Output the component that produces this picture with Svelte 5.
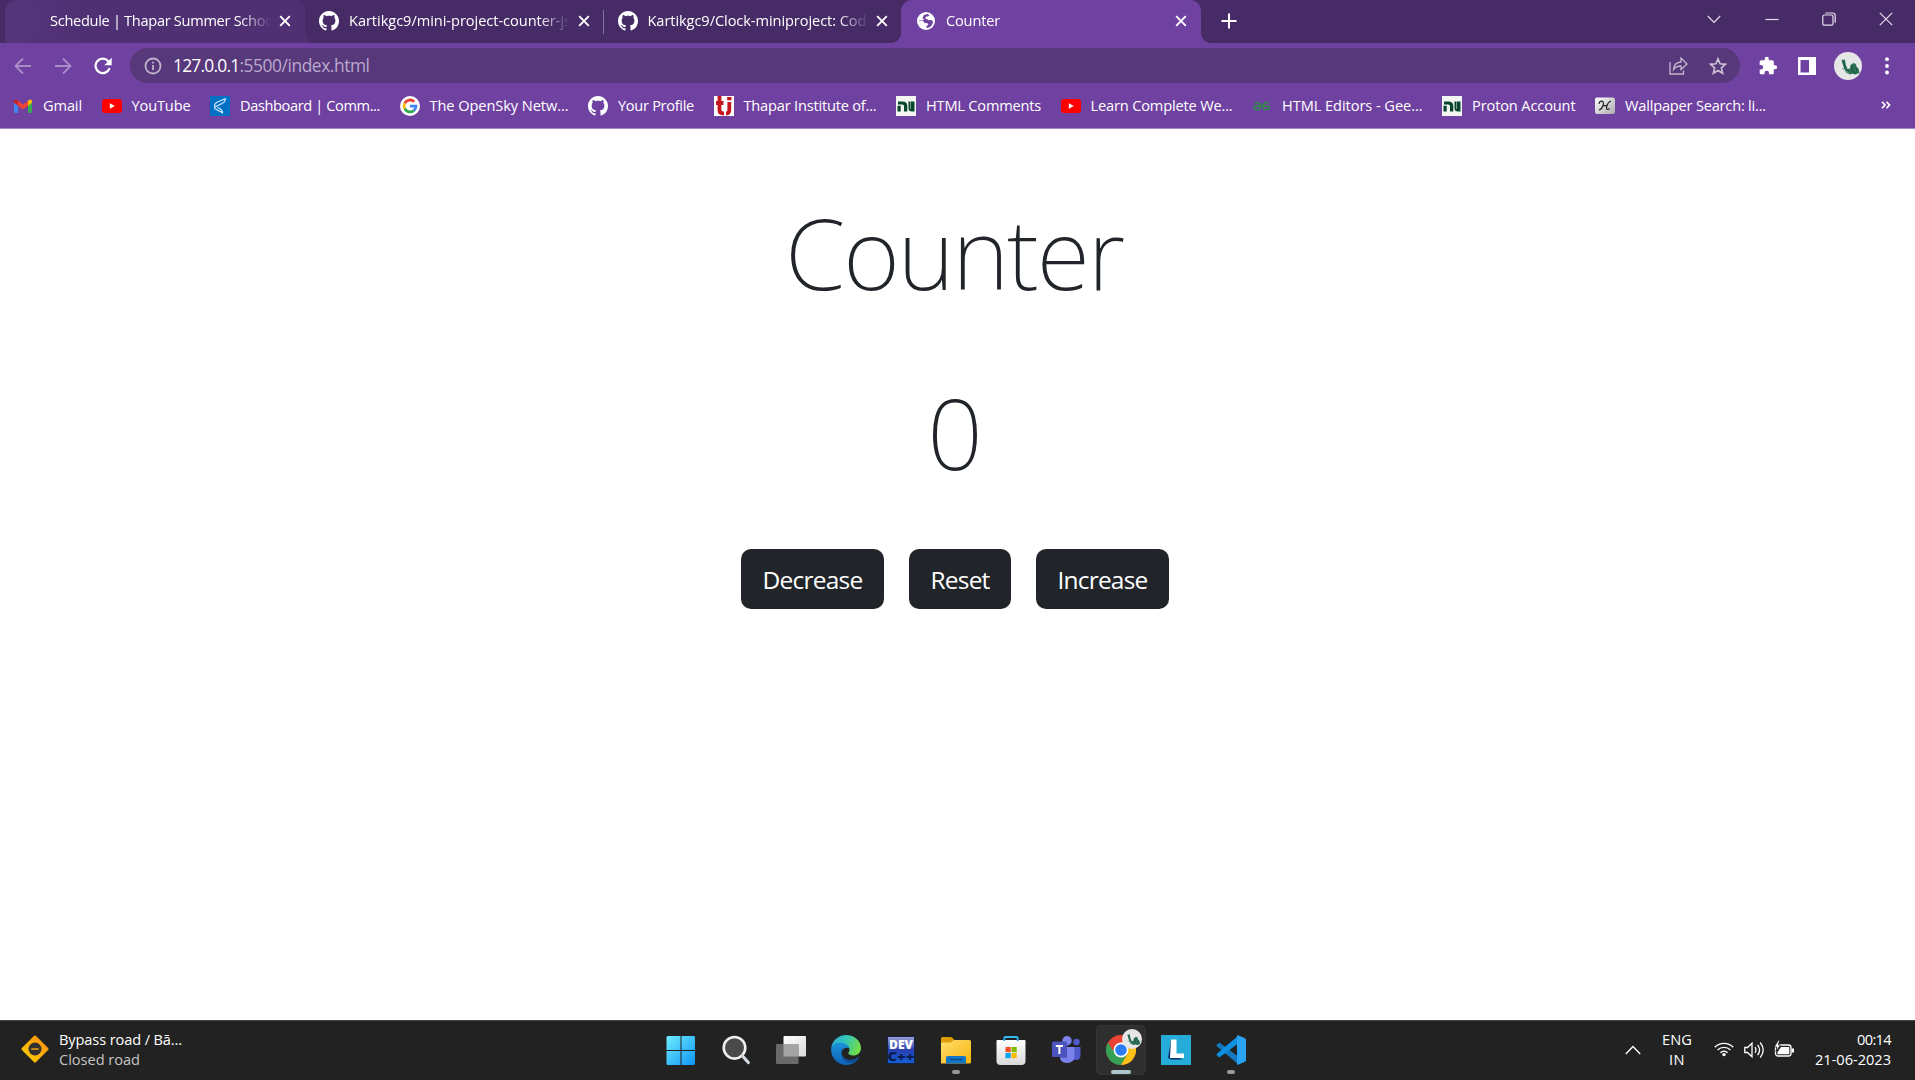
<script>
  let count = $state(0);

  // Spreads letter spacing so a label fills the given width in pixels.
  function fit(node, width) {
    const natural = node.getBoundingClientRect().width;
    node.style.letterSpacing = (width - natural) / node.textContent.length + 'px';
  }

  const tabs = [
    { title: 'Schedule | Thapar Summer School', width: 227, icon: '', kind: 'hover' },
    { title: 'Kartikgc9/mini-project-counter-js', width: 222, icon: 'github', kind: 'divided' },
    { title: 'Kartikgc9/Clock-miniproject: Code', width: 227, icon: 'github', kind: '' },
    { title: 'Counter', width: 54, icon: 'globe', kind: 'active' }
  ];

  const bookmarks = [
    { label: 'Gmail', icon: 'gmail', width: 39 },
    { label: 'YouTube', icon: 'youtube', width: 59 },
    { label: 'Dashboard | Comm...', icon: 'dash', width: 140 },
    { label: 'The OpenSky Netw...', icon: 'google', width: 139 },
    { label: 'Your Profile', icon: 'github', width: 76 },
    { label: 'Thapar Institute of...', icon: 'thapar', width: 133 },
    { label: 'HTML Comments', icon: 'nu', width: 115 },
    { label: 'Learn Complete We...', icon: 'youtube', width: 142 },
    { label: 'HTML Editors - Gee...', icon: 'gfg', width: 140.5 },
    { label: 'Proton Account', icon: 'nu', width: 103.5 },
    { label: 'Wallpaper Search: li...', icon: 'wall', width: 141 }
  ];

  const apps = ['start', 'search', 'views', 'edge', 'dev', 'files', 'store', 'teams', 'chrome', 'lens', 'code'];
</script>

{#snippet favicon(name)}
  {#if name === 'github'}
    <svg class="fav" viewBox="0 0 16 16"><path fill="#fff" d="M8 0C3.58 0 0 3.58 0 8c0 3.54 2.29 6.53 5.47 7.59.4.07.55-.17.55-.38 0-.19-.01-.82-.01-1.49-2.01.37-2.53-.49-2.69-.94-.09-.23-.48-.94-.82-1.13-.28-.15-.68-.52-.01-.53.63-.01 1.08.58 1.23.82.72 1.21 1.87.87 2.33.66.07-.52.28-.87.51-1.07-1.78-.2-3.64-.89-3.64-3.95 0-.87.31-1.59.82-2.15-.08-.2-.36-1.02.08-2.12 0 0 .67-.21 2.2.82.64-.18 1.32-.27 2-.27s1.36.09 2 .27c1.53-1.04 2.2-.82 2.2-.82.44 1.1.16 1.92.08 2.12.51.56.82 1.27.82 2.15 0 3.07-1.87 3.75-3.65 3.95.29.25.54.73.54 1.48 0 1.07-.01 1.93-.01 2.2 0 .21.15.46.55.38A8.01 8.01 0 0 0 16 8c0-4.42-3.58-8-8-8z" /></svg>
  {:else if name === 'globe'}
    <svg class="fav" viewBox="0 0 20 20"><circle cx="10" cy="10" r="9" fill="#fff" /><path fill="#6f42a1" d="M11.500 3 13.500 4 12 5.500H10.200L9 7.500l1.800.5 1.700 1.300 3-.3L17 10.500q-.3 4-4 6l-2.500.5 0-1.700L12.500 13.500 11 12H8.500L7.300 10H3.500L3 11.500V10.500L3 9.500H6.500L8 8.500 6.500 7 8 4z" /><path fill="#fff" d="M3 10.500 7 10.800 8.200 12.600 10 13.200 9.500 15.500 10.500 17.500 6 16.500z" /></svg>
  {:else if name === 'gmail'}
    <svg class="fav" viewBox="0 0 20 20"><path fill="#4285f4" d="M1 6v9.600c0 .8.6 1.400 1.400 1.400H5V9z" /><path fill="#34a853" d="M15 9v8h2.600c.8 0 1.400-.6 1.400-1.400V6z" /><path fill="#ea4335" d="M5 4.700v5L10 13.500l5-3.800v-5L10 8.500z" /><path fill="#c5221f" d="M1 5.300v1.500l4 3v-5L4 3.900C2.800 3 1 3.800 1 5.300z" /><path fill="#fbbc04" d="M15 4.700v5l4-3V5.300c0-1.500-1.800-2.300-3-1.400z" /></svg>
  {:else if name === 'youtube'}
    <svg class="fav" viewBox="0 0 20 20"><rect y="3" width="20" height="14" rx="3" fill="#f00" /><path fill="#fff" d="m7.800 7.200 5 2.800-5 2.800z" /></svg>
  {:else if name === 'dash'}
    <svg class="fav" viewBox="0 0 20 20"><path fill="#0070c4" d="M0 0h20v20H0z" /><path fill="none" stroke="#cfe9ff" stroke-width="1.200" d="M15.500 2.500 6.500 6.500Q4.500 7.800 4.500 10.500M15.500 2.500q0 3.500-4.500 5.500L5 11q-1 1 0 1.800l7.500 4q.3-2.500-3-4.300L7.500 11.500" /></svg>
  {:else if name === 'google'}
    <svg class="fav" viewBox="0 0 20 20"><circle cx="10" cy="10" r="10" fill="#fff" /><g fill="none" stroke-width="2.800"><path stroke="#ea4335" d="M4.700 7.300A6 6 0 0 1 14.200 5.700" /><path stroke="#fbbc05" d="M4.700 12.700a6 6 0 0 1 0-5.400" /><path stroke="#34a853" d="M13.800 14.600a6 6 0 0 1-9.100-1.900" /><path stroke="#4285f4" d="M10 10.200h6a6 6 0 0 1-2.200 4.400" /></g></svg>
  {:else if name === 'thapar'}
    <svg class="fav" viewBox="0 0 20 20"><path fill="#fff" d="M0 0h20v20H0z" /><path fill="none" stroke="#c4161c" stroke-width="3.800" d="M5.500 0v14.500q0 3 4.500 3M2 7h7.500M15.300 6v8q0 3.500-3.300 3.500" /><path fill="#c4161c" d="M13.200 1h4.300v3.300h-4.300z" /></svg>
  {:else if name === 'nu'}
    <svg class="fav" viewBox="0 0 20 20"><path fill="#f3f5f3" d="M0 0h20v20H0z" /><path fill="#07452c" d="M1.500 15.500V9.700h3.200v5.800zM2 5.500h4.500q4.800 0 4.800 4.500v5.500H8V10q0-1.500-1.800-1.500H2zM12.500 5.500h1.800v7q0 .5.500.5V5.500h3.700v10h-2.300q-3.700 0-3.700-3.500z" /></svg>
  {:else if name === 'gfg'}
    <svg class="fav" viewBox="0 0 20 20"><path fill="none" stroke="#2f8d46" stroke-width="1.500" d="M1 10.200h17M3 7.200Q5 6 7 7.300q2.300 1.800 1.300 4.500Q6.500 14.500 3.500 13.500 1.700 12.500 2 10.200M16.500 7.200Q14.500 6 12.500 7.300q-2.300 1.800-1.300 4.500 1.800 2.700 4.800 1.700 1.800-1 1.500-3.300" /></svg>
  {:else if name === 'wall'}
    <svg class="fav" viewBox="0 0 20 20"><defs><linearGradient id="wallbg" x2="1" y2="1"><stop stop-color="#fff" /><stop offset="1" stop-color="#aaa" /></linearGradient></defs><rect y="1.500" width="20" height="16.500" rx="2" fill="url(#wallbg)" /><path fill="none" stroke="#222" stroke-width="1.200" d="M4 7.800Q4.500 5 7 5.200q2.200.5 1 4.300Q6.500 13.500 4 14M16 5Q13 6 11.800 10q-.8 3.500.7 3.500 1.200 0 2-1.200M7.500 9.800l4.500-.5" /></svg>
  {/if}
{/snippet}

{#snippet bird()}
  <svg viewBox="0 0 28 28"><circle cx="14" cy="14" r="14" fill="#e6e6e6" /><path fill="#2b7356" d="m7.500 8 3.500-.5.800 5.500 1.700 4 2.500-.5.500-3.500 3-2 2.500 1 .5 3 2 1.500 1 4.500-4 1.500-3-.8-3 .8-3.500-2-2-4-1.500-5z" /><path fill="none" stroke="#174b39" stroke-width=".9" d="m9 9 1.500 4 2 4 4 4m1.500-8 0 5.500 4 3m0-7 1 5" /><path fill="none" stroke="#7fa495" stroke-width="1" d="m8 16.500 3.500 1.500m0 1 4 2.500" /></svg>
{/snippet}

{#snippet closeMark()}
  <svg class="x" viewBox="0 0 12 12"><path fill="none" stroke="#fff" stroke-width="1.900" d="m1.200 1.200 9.600 9.600m0-9.600-9.600 9.600" /></svg>
{/snippet}

{#snippet app(name)}
  <svg class="app" viewBox="0 0 30 30">
    {#if name === 'start'}
      <defs><linearGradient id="win" x1="0" y1="0" x2="30" y2="30" gradientUnits="userSpaceOnUse"><stop stop-color="#72eeff" /><stop offset="1" stop-color="#0c93f5" /></linearGradient></defs>
      <path fill="url(#win)" d="M1.500 1H14.500v14H.500V2zM15.500 1h12.500l1 1v13H15.500zM.5 16H14.500v14H1.500l-1-1zM15.500 16h13.500v13l-1 1H15.500z" />
    {:else if name === 'search'}
      <circle cx="13.500" cy="12.800" r="10.800" fill="#4a4a4a" stroke="#f0f0f0" stroke-width="2.600" /><path stroke="#d4d8e2" stroke-width="3.200" stroke-linecap="round" d="m21.500 21 5.800 6.500" />
    {:else if name === 'views'}
      <defs><linearGradient id="vw" x2="1" y2="1"><stop stop-color="#fff" /><stop offset="1" stop-color="#d9d9d9" /></linearGradient></defs>
      <rect x="7.500" y="1" width="22.500" height="20.500" rx="1" fill="url(#vw)" /><rect x="0" y="9" width="22.500" height="20" rx="1" fill="#6a6a6a" /><path fill="#a4a4a4" d="M7.500 9h14q1 0 1 1v11.500h-15z" />
    {:else if name === 'edge'}
      <defs><linearGradient id="e1" x2="1" y2=".3"><stop stop-color="#2aa5e0" /><stop offset=".55" stop-color="#35c8b5" /><stop offset="1" stop-color="#6fdc4b" /></linearGradient><linearGradient id="e2" x2="0" y2="1"><stop stop-color="#1a93d8" /><stop offset="1" stop-color="#0d62b8" /></linearGradient></defs>
      <path fill="url(#e1)" d="M.2 13C1.300 5.500 7.300 0 15 0c8.500 0 15 6 15 13 0 5-3.800 7.500-7.700 7.500-3 0-5-1-5-2.200 0-1 1.200-1.500 1.200-3.600 0-3-3-5.700-7.300-5.700C6.500 9 2 10.500.2 13z" />
      <path fill="url(#e2)" d="M.2 13C1.500 9.500 5.500 7.500 9.500 7.500c4.800 0 8.500 3 9 6.500-1.500-2-6.300-1.500-7.500 2-1.500 5 2.500 9 8 9 3.500 0 6.300-1.500 7.600-2.500.7-.4 1.200.1.800.7C24.800 27.500 20.500 30 15 30 6 30-.8 22 .2 13z" />
      <path fill="#114d98" d="M11 13.500c-3 5.500.5 13.500 8 14.200 3 .2 5.500-1 8.400-4.500.4-.6-.1-1.100-.8-.7-1.300 1-4 2.500-7.600 2.500-5.500 0-9.500-4-8-9z" />
    {:else if name === 'dev'}
      <defs><linearGradient id="dv" x2="0" y2="1"><stop stop-color="#9aa2d8" /><stop offset=".5" stop-color="#283fae" /><stop offset="1" stop-color="#1160d6" /></linearGradient></defs>
      <path fill="url(#dv)" stroke="#162246" d="M1.500 1.500h27v27h-27z" />
      <text x="15" y="13.600" text-anchor="middle" textLength="24" lengthAdjust="spacingAndGlyphs" font-size="12" font-weight="800" fill="#fff">DEV</text><text x="15" y="26.300" text-anchor="middle" textLength="27" lengthAdjust="spacingAndGlyphs" font-size="13" font-weight="800" fill="#0a1b4c">C++</text>
    {:else if name === 'files'}
      <defs><linearGradient id="fl" x2="1" y2="1"><stop stop-color="#ffe06e" /><stop offset="1" stop-color="#f9b20d" /></linearGradient></defs>
      <path fill="#df9c08" d="M0 3.500Q0 2 1.500 2h8q1 0 2 1l2.500 2.500L10 9H0z" /><path fill="url(#fl)" d="M0 7.500h9.500L13 5h15.500Q30 5 30 6.500V27q0 1.500-1.500 1.500H0z" /><path fill="#1275c6" d="M5 28.500V23q0-2 2-2h16q2 0 2 2v5.500z" /><path stroke="#084c8e" stroke-width="1.300" d="M9 24.500h12.500" />
    {:else if name === 'store'}
      <defs><linearGradient id="st" x2="0" y2="1"><stop stop-color="#fff" /><stop offset="1" stop-color="#d9d9d9" /></linearGradient></defs>
      <path fill="none" stroke="#34b8ee" stroke-width="1.900" d="M8.300 7V3.200q0-1.200 1.200-1.200h11q1.200 0 1.200 1.200V7" /><path fill="url(#st)" d="M.5 6q0-1 1-1h27q1 0 1 1v20q0 4-4 4h-21q-4 0-4-4z" /><path fill="none" stroke="#1597dc" stroke-width="1.600" d="M8.300 6V3M21.700 6V3" /><path fill="#f25022" d="M9.500 12h5.200v5.200H9.500z" /><path fill="#7fba00" d="M15.500 12h5.200v5.200h-5.200z" /><path fill="#00a4ef" d="M9.500 18h5.200v5.200H9.500z" /><path fill="#ffb900" d="M15.500 18h5.200v5.200h-5.200z" />
    {:else if name === 'teams'}
      <circle cx="25.500" cy="7" r="3.200" fill="#5059c9" /><path fill="#5059c9" d="M20 12h9.500v8.500q0 4.500-5 4.500H20z" /><circle cx="16" cy="5.700" r="4.700" fill="#7b83eb" /><path fill="#7b83eb" d="M9 12h13.500q1 0 1 1v8q0 7-7.500 7t-7-7z" /><path fill="#3c45ab" d="M10 7.500h6v15.500h-6z" opacity=".55" /><rect x="1" y="6.500" width="15" height="15.500" rx="1.500" fill="#4b53bc" /><path fill="#fff" d="M4.800 10h7.200v1.900H9.400v7H7.400v-7H4.800z" />
    {:else if name === 'chrome'}
      <circle cx="15" cy="15" r="15" fill="#ea4335" /><path fill="#34a053" d="M2 7.500A15 15 0 0 0 15 30l6.300-11.300L15 15H6.400z" /><path fill="#fbc116" d="M15 30A15 15 0 0 0 28 7.500H15L21.500 18.700z" /><circle cx="15" cy="15" r="7.400" fill="#fff" /><circle cx="15" cy="15" r="5.800" fill="#2a7cf0" />
    {:else if name === 'lens'}
      <path fill="#25acd9" d="M0 0h30v30H0z" /><path fill="#12306a" d="M10 4.500 7 23l3 1.500h12l-10-4z" /><path fill="#fff" d="M10 4.500h5.500v14H23V23H9z" />
    {:else if name === 'code'}
      <path fill="#1279bf" d="M1 9.500q-1 1-.1 1.800L22.500 29.500V21.700L4 8q-.6-.5-1.200 0z" /><path fill="#0e8fe0" d="M1 20.500q-1-1-.1-1.800L22.500.5v7.800L4 22q-.6.500-1.200 0z" /><path fill="#29a3f2" d="M22 .2 29 3.300q1 .5 1 1.600v20.200q0 1.100-1 1.600l-7 3.100q-1 .3-1-.8V1q0-1.100 1-.8z" />
    {/if}
  </svg>
{/snippet}

<div class="screen">
  <div class="strip">
    <div class="tabs">
      {#each tabs as tab}
        <div class="tab {tab.kind}">
          <div class="favbox">{@render favicon(tab.icon)}</div>
          <div class="title"><span class="fit" use:fit={tab.width}>{tab.title}</span></div>
          {@render closeMark()}
        </div>
      {/each}
    </div>
    <svg class="plus" viewBox="0 0 16 16"><path stroke="#fff" stroke-width="2" d="M8 .5v15M.5 8h15" /></svg>
    <div class="window">
      <svg viewBox="0 0 14 14"><path d="m.8 4 6.200 6.300L13.200 4" /></svg>
      <svg viewBox="0 0 14 14"><path d="M.5 7.500h13" /></svg>
      <svg viewBox="0 0 14 14"><rect x=".8" y="3" width="10.200" height="10.200" rx="1.500" /><path d="M3.300 1h7.200q2.700 0 2.700 2.700v7" /></svg>
      <svg viewBox="0 0 14 14"><path d="m.8.8 12.400 12.400m0-12.400L.8 13.200" /></svg>
    </div>
  </div>

  <div class="toolbar">
    <svg class="nav dim" viewBox="0 0 18 18"><path d="M17 9H1.500M9 1.500 1.500 9 9 16.500" /></svg>
    <svg class="nav dim" viewBox="0 0 18 18"><path d="M1 9h15.500M9 1.500 16.500 9 9 16.500" /></svg>
    <svg class="nav" viewBox="0 0 18 18"><path stroke-width="2.200" d="M15.600 11.200A7.200 7.200 0 1 1 14.300 4.300L16 6" /><path fill="#fff" stroke="none" d="M17.700.8v7.400h-7.400z" /></svg>
    <div class="omnibox">
      <svg class="info" viewBox="0 0 18 18"><circle cx="9" cy="9" r="7.500" /><path d="M9 8v5M9 4.800v1.800" /></svg>
      <span class="fit host" use:fit={66.5}>127.0.0.1</span><span class="fit path" use:fit={130}>:5500/index.html</span>
      <svg class="share" viewBox="0 0 19 19"><path d="M1 6v12h13.500v-3.500M4.500 13.500Q5 6.500 12 6V2l6 6-6 5.500V10q-5 0-7.500 3.500z" /></svg>
      <svg class="star" viewBox="0 0 18 18"><path d="m9 1.800 2.100 5 5.400.5-4.100 3.600 1.200 5.300L9 13.400l-4.600 2.800 1.200-5.300L1.500 7.300l5.400-.5z" /></svg>
    </div>
    <svg class="puzzle" viewBox="0 0 24 24"><path fill="#fff" d="M20.500 11H19V7c0-1.100-.9-2-2-2h-4V3.500a2.500 2.500 0 0 0-5 0V5H4c-1.100 0-2 .9-2 2v3.800h1.500a2.700 2.700 0 0 1 0 5.400H2V20c0 1.100.9 2 2 2h3.800v-1.500a2.700 2.700 0 0 1 5.400 0V22H17c1.100 0 2-.9 2-2v-4h1.500a2.500 2.500 0 0 0 0-5z" /></svg>
    <svg class="panel" viewBox="0 0 18 18"><path fill="#fff" fill-rule="evenodd" d="M0 0h18v18H0zM2.500 3v12.500H11V3z" /></svg>
    <div class="avatar">{@render bird()}</div>
    <svg class="dots" viewBox="0 0 4 18"><circle cx="2" cy="2.200" r="1.900" /><circle cx="2" cy="9" r="1.900" /><circle cx="2" cy="15.500" r="1.900" /></svg>
  </div>

  <div class="bookmarks">
    {#each bookmarks as mark}
      <div class="mark">
        {@render favicon(mark.icon)}
        <span class="fit" use:fit={mark.width}>{mark.label}</span>
      </div>
    {/each}
    <svg class="more" viewBox="0 0 10 8"><path fill="none" stroke="#fff" stroke-width="1.700" d="m1 .7 3 3.300-3 3.300M5.500.7l3 3.300-3 3.300" /></svg>
  </div>

  <main>
    <h1><span class="fit" use:fit={338}>Counter</span></h1>
    <p class="value">{count}</p>
    <div class="buttons">
      <button onclick={() => count--}><span class="fit" use:fit={100}>Decrease</span></button>
      <button onclick={() => (count = 0)}><span class="fit" use:fit={59}>Reset</span></button>
      <button onclick={() => count++}><span class="fit" use:fit={90}>Increase</span></button>
    </div>
  </main>

  <footer>
    <div class="widget">
      <svg viewBox="0 0 30 30"><defs><linearGradient id="rd" x2="0" y2="1"><stop stop-color="#ff9a10" /><stop offset="1" stop-color="#fdc400" /></linearGradient></defs><rect x="5" y="5" width="20" height="20" rx="1.500" transform="rotate(45 15 15)" fill="url(#rd)" /><circle cx="15" cy="15" r="6.500" fill="#33312f" /><path stroke="#ffae0a" stroke-width="1.400" d="M11.300 15h7.400" /></svg>
      <div class="lines"><span class="fit" use:fit={123}>Bypass road / Bā...</span><span class="fit soft" use:fit={81}>Closed road</span></div>
    </div>
    <div class="dock">
      {#each apps as name}
        <div class="slot {name}">
          {@render app(name)}
          {#if name === 'chrome'}<div class="badge">{@render bird()}</div>{/if}
        </div>
      {/each}
    </div>
    <div class="tray">
      <svg class="up" viewBox="0 0 16 10"><path d="M.8 9 8 1.500 15.200 9" /></svg>
      <div class="lines lang"><span class="fit" use:fit={30}>ENG</span><span class="fit" use:fit={16}>IN</span></div>
      <svg class="wifi" viewBox="0 0 20 16"><path d="M.8 6.200a13 13 0 0 1 18.400 0M3.600 9a9 9 0 0 1 12.800 0M6.400 11.700a5.200 5.200 0 0 1 7.200 0" /><circle cx="10" cy="13.600" r="1.700" fill="#fff" stroke="none" /></svg>
      <svg class="sound" viewBox="0 0 20 18"><path d="M.8 6.500v5h2.700L8 15.800V2.200L3.500 6.500zM11 6.200q2 2.800 0 5.600M13.600 3.800q4 5.200 0 10.400M16.200 1.500q6 7.500 0 15" /></svg>
      <svg class="battery" viewBox="0 0 20 17"><rect x="1.500" y="5" width="15.500" height="11" rx="2.500" /><path fill="#fff" stroke="none" d="M7 7h8.300v7.200H3.500V12zM17.500 8.500H20v4h-2.500z" /><path fill="#fff" stroke="#222" stroke-width=".8" d="M4.300.3.200 7h2.600l-.8 4.500L6.500 5H4.200l1.500-4.700z" /></svg>
      <div class="lines clock"><span class="fit" use:fit={34}>00:14</span><span class="fit" use:fit={76}>21-06-2023</span></div>
    </div>
  </footer>
</div>

<style>
  :global(body) { background: #fff; overflow: hidden; }
  .screen { width: 1915px; height: 1080px; display: flex; flex-direction: column; font-family: "Open Sans", "Noto Sans", sans-serif; font-size: 14.600px; color: #fff; }
  .screen * { box-sizing: border-box; }
  svg { display: block; flex: none; }
  .fit { display: inline-block; white-space: pre; }
  .fav { width: 20px; height: 20px; }

  .strip { height: 43px; flex: none; background: #472b66; display: flex; align-items: center; }
  .tabs { display: flex; height: 43px; padding-left: 5px; }
  .tab { position: relative; width: 298.500px; display: flex; align-items: center; padding: 0 14px 1px 14px; border-radius: 11px 11px 0 0; }
  .tab.hover { width: 300px; background: radial-gradient(circle at 10px 20px, #56357c, #4f3073 70px); }
  .tab.divided::after { content: ""; position: absolute; right: 0; top: 10px; width: 1px; height: 24px; background: #85719c; }
  .tab.active { width: 300px; margin-left: -1px; padding-left: 15px; background: #6f42a1; }
  .tab.active::before, .tab.active::after, .tab.hover::after { content: ""; position: absolute; bottom: 0; width: 10px; height: 10px; }
  .tab.active::before { left: -10px; background: radial-gradient(circle at 0 0, #472b66 9.500px, #6f42a1 10.200px); }
  .tab.active::after { right: -10px; background: radial-gradient(circle at 100% 0, #472b66 9.500px, #6f42a1 10.200px); }
  .tab.hover::after { right: -10px; background: radial-gradient(circle at 100% 0, #472b66 9.500px, #4f3073 10.200px); }
  .favbox { width: 20px; height: 20px; margin-right: 10px; flex: none; }
  .tab.hover .favbox { margin-right: 11px; }
  .title { width: 220px; margin-right: 10px; padding-bottom: 2px; overflow: hidden; white-space: nowrap; mask-image: linear-gradient(90deg, #000 190px, transparent 221px); }
  .tab.hover .title { margin-right: 9px; }
  .x { width: 12px; height: 12px; flex: none; }
  .plus { width: 16px; height: 16px; margin-left: 19.500px; margin-bottom: 1px; }
  .window { margin-left: auto; margin-right: 22px; display: flex; gap: 43.200px; padding-bottom: 6px; }
  .window svg { width: 14px; height: 14px; fill: none; stroke: #e6e0ec; stroke-width: 1.200; }

  .toolbar { height: 43px; flex: none; background: #6f42a1; display: flex; align-items: center; padding: 2px 26px 0 14px; }
  .nav { width: 18px; height: 18px; margin-right: 22px; fill: none; stroke: #fff; stroke-width: 1.800; }
  .nav.dim { stroke: #a98cc8; }
  .omnibox { width: 1610px; height: 35px; margin-left: -4px; border-radius: 18px; background: #57387a; display: flex; align-items: center; padding: 0 13px 0 14px; font-size: 17.400px; }
  .omnibox .fit { padding-bottom: 1px; }
  .info { width: 18px; height: 18px; margin-right: 11px; fill: none; stroke: #bdb3ca; stroke-width: 1.800; }
  .path { color: #bba9cf; }
  .share { width: 19px; height: 19px; margin-left: auto; margin-right: 21px; fill: none; stroke: #c3b7cf; stroke-width: 1.300; }
  .star { width: 18px; height: 18px; fill: none; stroke: #c9bfd2; stroke-width: 1.700; }
  .puzzle { width: 20px; height: 20px; margin-left: 17.500px; }
  .panel { width: 18px; height: 18px; margin-left: 20.500px; }
  .avatar { width: 28px; height: 28px; margin-left: 17.500px; }
  .dots { width: 4px; height: 18px; margin-left: auto; fill: #fff; }

  .bookmarks { height: 43px; flex: none; background: #6f42a1; border-bottom: 1px solid #a288c3; display: flex; align-items: center; gap: 20px; padding: 0 0 2px 13px; }
  .mark { display: flex; align-items: center; gap: 10px; flex: none; margin-right: -.500px; }
  .mark .fit { padding-bottom: 3px; }
  .more { width: 10px; height: 8px; margin-left: auto; margin-right: 24px; margin-bottom: 2px; }

  main { flex: 1; background: #fff; color: #212529; display: flex; flex-direction: column; align-items: center; padding-right: 5px; padding-top: 64px; }
  h1, .value { margin: 0; height: 120px; line-height: 120px; font-family: "Noto Sans", "Open Sans", sans-serif; font-size: 97.500px; font-weight: 250; }
  h1 { padding-right: 2px; }
  .value { margin-top: 60px; }
  .buttons { display: flex; gap: 25px; margin-top: 56px; }
  button { height: 60px; padding: 0 21.500px; border: 0; border-radius: 10px; background: #212529; color: #fff; font-family: inherit; font-size: 24.500px; line-height: 61px; }

  footer { height: 60px; flex: none; background: #222; border-top: 1px solid #464848; display: grid; grid-template-columns: 653px 605px 1fr; }
  .widget { display: flex; padding-left: 20px; gap: 9px; }
  .widget svg { width: 30px; height: 30px; margin-top: 13px; }
  .lines { display: flex; flex-direction: column; align-items: flex-start; line-height: 20px; padding-top: 8px; }
  .soft { color: #c4c4c4; }
  .dock { display: flex; }
  .slot { position: relative; width: 55px; height: 59px; display: flex; justify-content: center; padding-top: 14px; }
  .app { width: 30px; height: 30px; }
  .slot.chrome { width: 50px; height: 50px; margin: 4px 2.500px 0; background: #2f2f2f; border: 1px solid #363636; border-radius: 5px; padding-top: 9px; }
  .slot.files::after, .slot.code::after, .slot.chrome::after { content: ""; position: absolute; top: 49px; left: 23.500px; width: 8px; height: 4px; border-radius: 2px; background: #999; }
  .slot.chrome::after { top: 44px; left: 14px; width: 20px; background: #adc6cc; }
  .badge { position: absolute; left: 25px; top: 3px; width: 20px; height: 20px; }
  .tray { display: flex; justify-content: flex-end; align-items: flex-start; padding-right: 24px; }
  .tray > svg { fill: none; stroke: #fff; stroke-width: 1.300; }
  .up { width: 16px; height: 10px; margin: 24px 21px 0 0; }
  .lang { align-items: center; width: 30px; margin-right: 22px; padding-top: 8px; }
  .wifi { width: 20px; height: 16px; margin: 20px 10px 0 0; }
  .sound { width: 20px; height: 18px; margin: 20px 10px 0 0; }
  .battery { width: 20px; height: 17px; margin: 19px 20px 0 0; }
  .clock { align-items: flex-end; width: 77px; }
</style>
